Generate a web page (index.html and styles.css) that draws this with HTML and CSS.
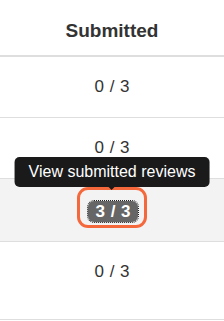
FILE: index.html
```html
<!DOCTYPE html>
<html>
<head>
<meta charset="utf-8">
<link rel="stylesheet" href="styles.css">
</head>
<body>
<div class="table">
  <div class="head">Submitted</div>
  <div class="row">0 / 3</div>
  <div class="row">0 / 3</div>
  <div class="row active">
    <div class="cell">
      <button class="ring"><span class="pill">3 / 3</span></button>
      <div class="tooltip">View submitted reviews</div>
    </div>
  </div>
  <div class="row last">0 / 3</div>
</div>
</body>
</html>
```

FILE: styles.css
```css
html, body {
  margin: 0;
  padding: 0;
  background: #fff;
}
body {
  font-family: "Liberation Sans", Arial, sans-serif;
  color: #333;
  width: 224px;
  height: 321px;
  overflow: hidden;
}
.table {
  display: flex;
  flex-direction: column;
}
.head {
  display: flex;
  align-items: center;
  justify-content: center;
  font-weight: bold;
  font-size: 19px;
  border-bottom: 2px solid #dedede;
  box-sizing: border-box;
  height: 57px;
  padding-top: 6px;
}
.row {
  border-bottom: 1px solid #dedede;
  text-align: center;
  font-size: 17px;
  line-height: 20px;
  padding: 20px 0;
  height: 61px;
  box-sizing: border-box;
  word-spacing: 1px;
}
.row.active {
  background: #f3f3f3;
  height: 63px;
  padding: 0;
  display: flex;
  justify-content: center;
  word-spacing: normal;
}
.row.last {
  height: 78px;
}
.cell {
  position: relative;
  padding-top: 8px;
}
.ring {
  display: block;
  margin: 0;
  width: 70px;
  height: 41px;
  border: 3px solid #f4683c;
  border-radius: 11px;
  background: transparent;
  padding: 11px 6px 3px 8px;
  box-sizing: border-box;
}
.pill {
  display: block;
  background: #666;
  color: #fff;
  font-family: "Liberation Sans", Arial, sans-serif;
  font-weight: bold;
  font-size: 17px;
  line-height: 21px;
  border-radius: 6px;
  outline: 1px dotted #222;
  word-spacing: 1px;
}
.tooltip {
  position: absolute;
  left: 50%;
  bottom: 100%;
  margin-bottom: -8px;
  transform: translateX(-50%);
  white-space: nowrap;
  background: #1a1a1a;
  color: #fff;
  font-size: 16px;
  line-height: 30px;
  padding: 0 14px;
  border-radius: 5px;
}
.tooltip::after {
  content: "";
  position: absolute;
  left: 50%;
  top: 100%;
  margin-left: -3px;
  border-left: 3px solid transparent;
  border-right: 3px solid transparent;
  border-top: 3px solid #1a1a1a;
}
```
